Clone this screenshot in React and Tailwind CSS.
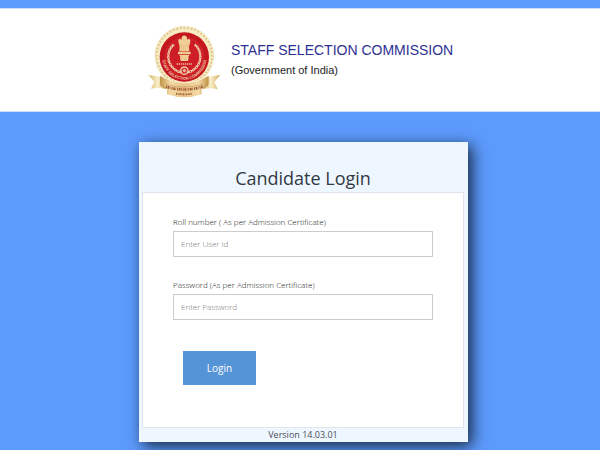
import React, { useState } from 'react';

const BEADS = Array.from({ length: 48 }, (_, i) => {
  const angle = (i / 48) * Math.PI * 2;
  return { x: 133 + Math.cos(angle) * 83, y: 107 + Math.sin(angle) * 83 };
});

// Laurel leaves on both sides of the lion capital
const LEAVES = Array.from({ length: 10 }, (_, i) => {
  const deg = 106 + i * 13;
  const rad = (deg * Math.PI) / 180;
  return { dx: Math.cos(rad) * 48, y: 110 + Math.sin(rad) * 48, deg };
});

function Emblem() {
  return (
    <svg
      viewBox="18 15 231 222"
      className="h-[74px] w-[77px] shrink-0"
      role="img"
      aria-label="Staff Selection Commission emblem"
    >
      <defs>
        <linearGradient id="band" x1="0" x2="1">
          <stop offset="0" stopColor="#c29648" />
          <stop offset="0.2" stopColor="#f3d9a4" />
          <stop offset="0.5" stopColor="#eac388" />
          <stop offset="0.8" stopColor="#f3d9a4" />
          <stop offset="1" stopColor="#c29648" />
        </linearGradient>
        <linearGradient id="tail" x1="0" x2="1">
          <stop offset="0" stopColor="#d5b266" />
          <stop offset="0.5" stopColor="#f8edc8" />
          <stop offset="1" stopColor="#d2aa5a" />
        </linearGradient>
        <path id="name-arc" d="M66 112 A67 67 0 0 0 200 112" />
      </defs>

      {/* Gold rim */}
      <circle cx="133" cy="107" r="88" fill="#f6ebc4" stroke="#ecdcae" strokeWidth="2" />
      {BEADS.map((bead, i) => (
        <circle key={i} cx={bead.x} cy={bead.y} r="3" fill="#dcc184" />
      ))}
      <circle cx="133" cy="110" r="76" fill="#f7e6bb" />
      <circle cx="133" cy="111" r="74" fill="#c4161d" />
      <circle cx="133" cy="110" r="58" fill="#cf1d25" stroke="#d8503f" strokeWidth="1" />

      {/* Wreath */}
      {LEAVES.map((leaf) => (
        <g key={leaf.deg} fill="#efc8a6">
          <ellipse cx={133 + leaf.dx} cy={leaf.y} rx="7" ry="2" transform={`rotate(${leaf.deg + 60} ${133 + leaf.dx} ${leaf.y})`} />
          <ellipse cx={133 + leaf.dx} cy={leaf.y} rx="7" ry="2" transform={`rotate(${leaf.deg + 120} ${133 + leaf.dx} ${leaf.y})`} />
          <ellipse cx={133 - leaf.dx} cy={leaf.y} rx="7" ry="2" transform={`rotate(${-leaf.deg - 60} ${133 - leaf.dx} ${leaf.y})`} />
          <ellipse cx={133 - leaf.dx} cy={leaf.y} rx="7" ry="2" transform={`rotate(${-leaf.deg - 120} ${133 - leaf.dx} ${leaf.y})`} />
        </g>
      ))}

      {/* Lion capital */}
      <g fill="#f1d098">
        <path d="M126 50q7 -7 14 0l2 9q7 -5 9 2l-1 9 -3 9 1 15h-30l1 -15 -3 -9 -1 -9q2 -7 9 -2z" />
        <rect x="114" y="95" width="38" height="8" rx="1" />
        <path d="M118 105h30l-3 6q3 8 -2 12h-20q-5 -4 -2 -12z" />
      </g>
      <g stroke="#d39a58" strokeWidth="1" fill="none">
        <path d="M128 58h3M136 58h3M131 64q3 2 5 0M122 68l3 18M145 68l-3 18M130 74v17M137 74v17" />
        <circle cx="133" cy="99" r="3" />
        <path d="M127 111v10M133 111v10M139 111v10" />
      </g>
      <path d="M110 132h46" stroke="#eeb896" strokeWidth="4" strokeDasharray="4 2" />

      {/* Wheel */}
      <circle cx="133" cy="152" r="11" fill="none" stroke="#f0c8a0" strokeWidth="4" />
      <circle cx="133" cy="152" r="4" fill="#f0c8a0" />
      <path d="M133 142v20M123 152h20M126 145l14 14M140 145l-14 14" stroke="#f0c8a0" strokeWidth="1" />

      <text fill="#f3c9b0" fontFamily="Liberation Sans, sans-serif" fontSize="12" fontWeight="700">
        <textPath href="#name-arc" startOffset="50%" textAnchor="middle">
          STAFF SELECTION COMMISSION
        </textPath>
      </text>

      {/* Ribbon */}
      <path d="M25 165l36 5 20 22 -4 15q-22 -5 -44 -1l10 -21z" fill="url(#tail)" />
      <path d="M241 165l-36 5 -20 22 4 15q22 -5 44 1l-10 -22z" fill="url(#tail)" />
      <path d="M61 167l19 24 -3 16 -16 -11z" fill="#b58640" />
      <path d="M205 167l-19 24 3 16 16 -11z" fill="#b58640" />
      <path d="M61 167q72 44 144 0v25q-10 10 -20 14v17q-52 18 -104 0v-17q-10 -4 -20 -14z" fill="url(#band)" />
      <path d="M61 167q72 44 144 0" fill="none" stroke="#f9edca" strokeWidth="3" />
      <g stroke="#9b5a30" fill="none">
        <path d="M78 193q55 17 110 0" strokeWidth="1" />
        <path d="M78 200q55 17 110 0" strokeWidth="8" strokeDasharray="3 2 5 2 2 3" />
        <path d="M108 221q25 4 50 0" strokeWidth="5" strokeDasharray="4 2 2 2" />
      </g>
    </svg>
  );
}

function Field({ id, label, type, placeholder, value, onChange }) {
  return (
    <div>
      <label htmlFor={id} className="block text-[8px] leading-[15px] font-light text-[#222222]">
        {label}
      </label>
      <input
        id={id}
        type={type}
        value={value}
        onChange={(e) => onChange(e.target.value)}
        placeholder={placeholder}
        className="mt-0.5 block h-[26px] w-full border border-[#cccccc] bg-white px-[7px] pb-0.5 text-[8px] font-light text-[#333333] placeholder-[#777777] focus:border-[#5594d6] focus:outline-none"
      />
    </div>
  );
}

export default function App() {
  const [userId, setUserId] = useState('');
  const [password, setPassword] = useState('');

  function handleSubmit(e) {
    e.preventDefault();
  }

  return (
    <div className="min-h-screen bg-[#5c9afc] pt-2 pb-2 font-['Open_Sans',sans-serif]">
      <header className="border-y border-[#cfe0fb] bg-white pt-4 pb-3">
        <div className="mx-auto flex max-w-[308px] items-start">
          <Emblem />
          <div className="pt-[15px] pl-2 font-['Liberation_Sans',sans-serif]">
            <h1 className="text-[14px] leading-5 whitespace-nowrap text-[#2e3192]">
              STAFF SELECTION COMMISSION
            </h1>
            <p className="text-[11px] leading-5 text-[#222222]">(Government of India)</p>
          </div>
        </div>
      </header>

      <div className="pl-[7px]">
        <main className="mx-auto mt-[30px] w-[329px] max-w-full bg-[#eef6ff] pr-1 pl-[3px] shadow-[4px_4px_14px_rgba(0,0,0,0.75)]">
          <h2 className="pt-[23px] pb-px text-center text-[18px] leading-[26px] text-[#333a42]">
            Candidate Login
          </h2>
          <form
            onSubmit={handleSubmit}
            className="border border-[#dfe5ec] bg-white px-[30px] pt-[21px] pb-[42px]"
          >
            <div className="space-y-5">
              <Field
                id="userId"
                label="Roll number ( As per Admission Certificate)"
                type="text"
                placeholder="Enter User Id"
                value={userId}
                onChange={setUserId}
              />
              <Field
                id="password"
                label="Password (As per Admission Certificate)"
                type="password"
                placeholder="Enter Password"
                value={password}
                onChange={setPassword}
              />
            </div>
            <button
              type="submit"
              className="mt-[31px] ml-[10px] block h-[34px] w-[73px] bg-[#5594d6] text-[10px] text-white hover:bg-[#4583c5]"
            >
              Login
            </button>
          </form>
          <p className="text-center text-[9px] leading-[14px] text-[#4a4f57]">Version 14.03.01</p>
        </main>
      </div>
    </div>
  );
}
